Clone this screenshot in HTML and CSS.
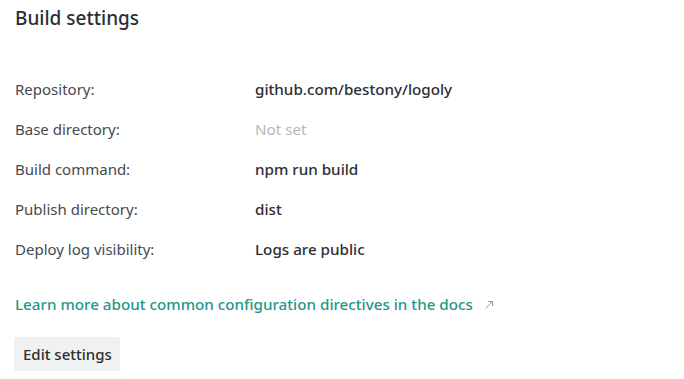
FILE: index.html
```html
<!doctype html>
<html>
<head>
  <meta charset="UTF-8">
  <title>Build settings</title>
  <link rel="stylesheet" href="styles.css">
</head>
<body>
  <section class="card">
    <h2 class="card-title">Build settings</h2>

    <dl class="settings">
      <div class="setting-row">
        <dt>Repository:</dt>
        <dd>github.com/bestony/logoly</dd>
      </div>
      <div class="setting-row">
        <dt>Base directory:</dt>
        <dd class="muted">Not set</dd>
      </div>
      <div class="setting-row">
        <dt>Build command:</dt>
        <dd>npm run build</dd>
      </div>
      <div class="setting-row">
        <dt>Publish directory:</dt>
        <dd>dist</dd>
      </div>
      <div class="setting-row">
        <dt>Deploy log visibility:</dt>
        <dd>Logs are public</dd>
      </div>
    </dl>

    <p class="docs">
      <a href="#" class="docs-link">Learn more about common configuration directives in the docs</a>
      <svg class="ext-icon" width="10" height="10" viewBox="0 0 10 10">
        <path d="M1.5 8.5 L8.5 1.5 M4 1.5 H8.5 V6" fill="none" stroke="#9a9ea3" stroke-width="1"/>
      </svg>
    </p>

    <button class="edit-button">Edit settings</button>
  </section>
</body>
</html>
```

FILE: styles.css
```css
* {
  box-sizing: border-box;
}

body {
  margin: 0;
  padding: 0;
  background: #fff;
  font-family: "Noto Sans", "Open Sans", sans-serif;
  color: #2e3136;
}

.card {
  padding: 5px 15px 0 14px;
}

.card-title {
  margin: 0 0 0 1px;
  font-size: 19px;
  font-weight: 500;
  line-height: 26px;
  color: #2b2e33;
}

.settings {
  margin: 38px 0 0 1px;
}

.setting-row {
  display: flex;
  align-items: center;
  height: 40px;
}

.setting-row dt {
  width: 240px;
  font-size: 15px;
  color: #46494e;
}

.setting-row dd {
  margin: 0;
  font-size: 15.2px;
  font-weight: 500;
  color: #2b2e33;
}

.setting-row dd.muted {
  color: #b5b7ba;
  font-weight: 400;
}

.docs {
  display: flex;
  align-items: center;
  gap: 11px;
  margin: 25px 0 0 1px;
  line-height: 20px;
}

.docs-link {
  font-size: 15.2px;
  font-weight: 500;
  color: #1f9688;
  text-decoration: none;
}

.ext-icon {
  margin-top: 2px;
}

.edit-button {
  margin-top: 23px;
  height: 34px;
  padding: 0 8px 0 9px;
  border: none;
  border-radius: 2px;
  background: #f0f1f1;
  font-family: inherit;
  font-size: 15px;
  font-weight: 500;
  color: #2b2e33;
}
```
